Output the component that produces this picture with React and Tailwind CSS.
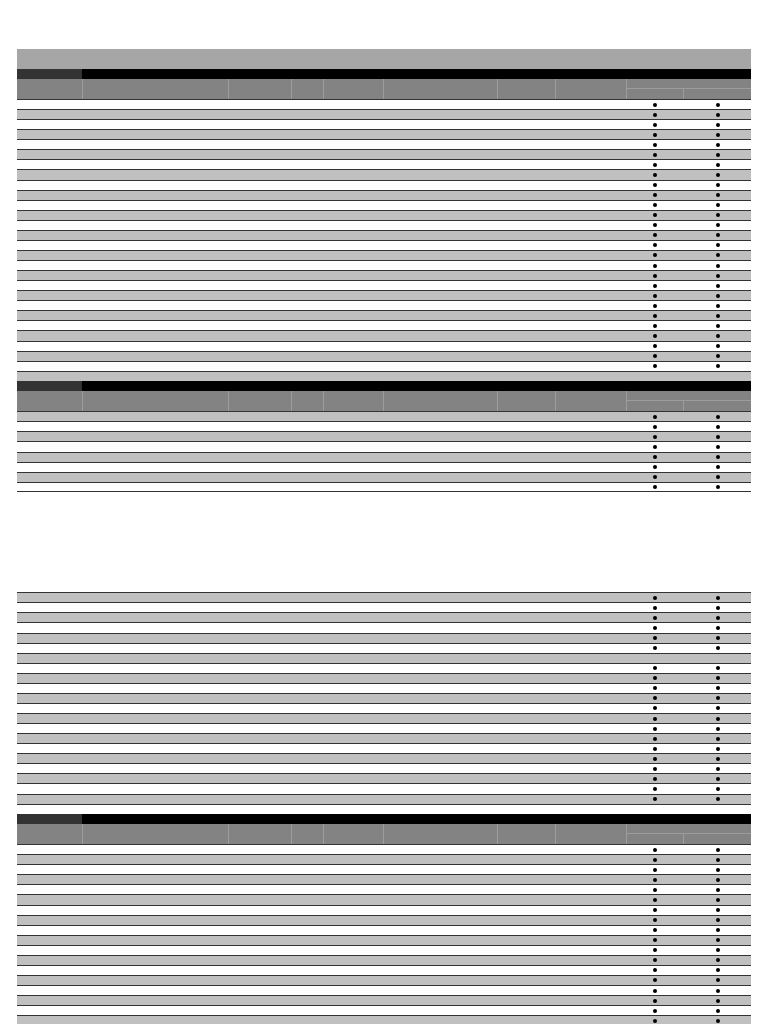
import React from "react";

function Dot() {
  return <span className="block w-[4px] h-[4px] rounded-full bg-black" />;
}

function Row({ gray, dots = true, bottom = false }) {
  return (
    <div
      className={`flex h-[10.07px] border-t border-[#333333] ${bottom ? "border-b" : ""} ${
        gray ? "bg-[#c0c0c0]" : "bg-white"
      }`}
    >
      <div className="w-[609px]" />
      <div className="w-[58px] flex items-center justify-center">{dots && <Dot />}</div>
      <div className="w-[67px] flex items-center justify-center">{dots && <Dot />}</div>
    </div>
  );
}

function Header() {
  return (
    <div>
      <div className="flex h-[10px] bg-black">
        <div className="w-[65px] bg-[#333333]" />
      </div>
      <div className="flex h-[20.5px] bg-[#838383]">
        <div className="w-[65px]" />
        <div className="w-[146px] border-l border-[#9d9d9d]" />
        <div className="w-[63px] border-l border-[#9d9d9d]" />
        <div className="w-[32px] border-l border-[#9d9d9d]" />
        <div className="w-[60px] border-l border-[#9d9d9d]" />
        <div className="w-[114px] border-l border-[#9d9d9d]" />
        <div className="w-[58px] border-l border-[#9d9d9d]" />
        <div className="w-[71px] border-l border-[#9d9d9d]" />
        <div className="w-[125px] border-l border-[#9d9d9d] flex flex-col">
          <div className="h-[10.5px] border-b border-[#9d9d9d]" />
          <div className="flex flex-1">
            <div className="w-[57px] border-r border-[#9d9d9d]" />
            <div className="flex-1" />
          </div>
        </div>
      </div>
    </div>
  );
}

export default function App() {
  const s1 = Array.from({ length: 27 }, (_, i) => i);
  const s2 = Array.from({ length: 8 }, (_, i) => i);
  const s3 = Array.from({ length: 21 }, (_, i) => i);
  const s4 = Array.from({ length: 22 }, (_, i) => i);
  return (
    <div className="bg-white pt-[49px] pl-[17px] font-['Liberation_Sans',sans-serif]">
      <div className="w-[734px]">
        {/* Section 1 */}
        <div className="h-[19.5px] bg-[#a6a6a6]" />
        <Header />
        {s1.map((i) => (
          <Row key={"a" + i} gray={i % 2 === 1} />
        ))}
        <Row gray dots={false} />

        {/* Section 2 */}
        <Header />
        {s2.map((i) => (
          <Row key={"b" + i} gray={i % 2 === 0} bottom={i === 7} />
        ))}

        <div className="h-[100.5px]" />

        {/* Section 3 */}
        {s3.map((i) => (
          <Row key={"c" + i} gray={i % 2 === 0} dots={i !== 6} />
        ))}
        <Row gray={false} dots={false} />

        {/* Section 4 */}
        <Header />
        {s4.map((i) => (
          <Row key={"d" + i} gray={i % 2 === 1} />
        ))}
      </div>
    </div>
  );
}
